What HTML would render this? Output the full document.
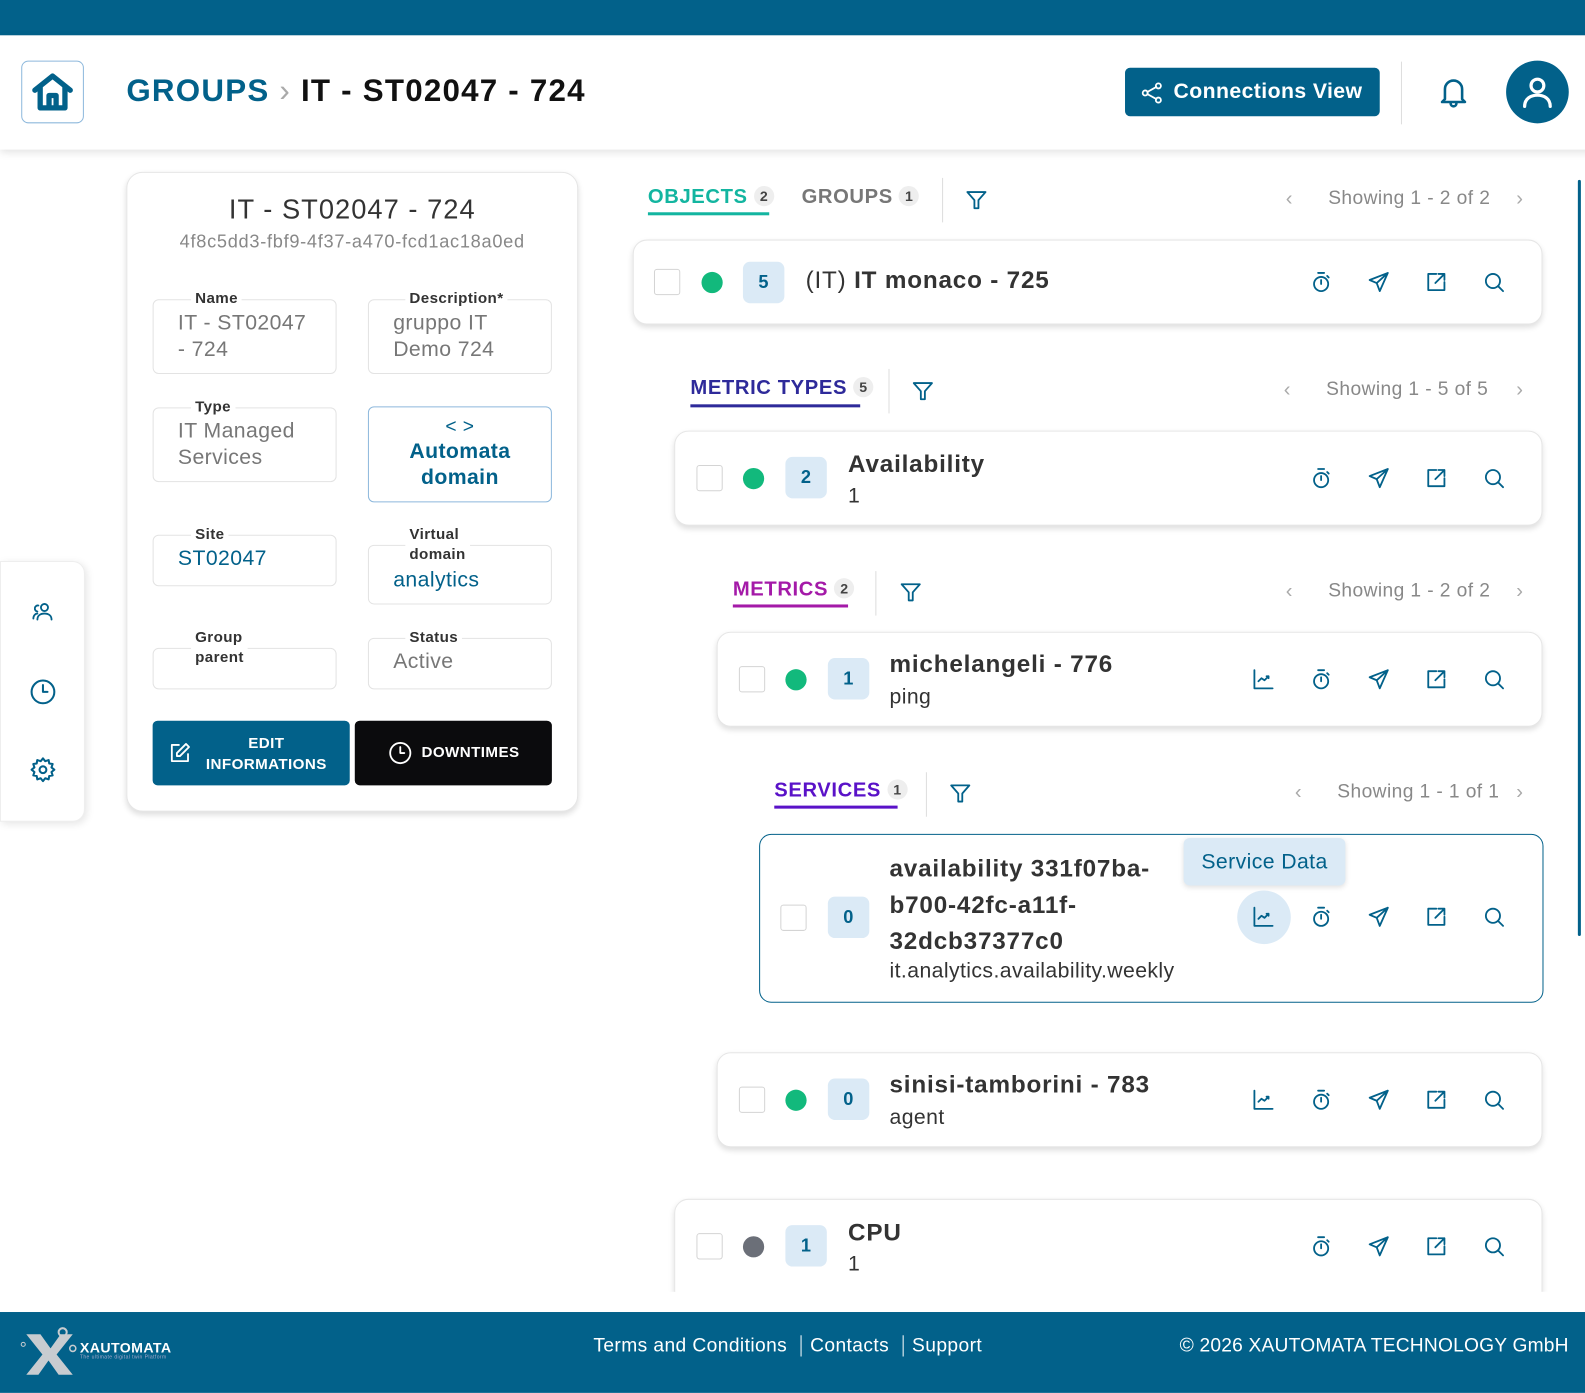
<!DOCTYPE html>
<html><head><meta charset="utf-8">
<style>
*{box-sizing:border-box;margin:0;padding:0}
body{width:1585px;height:1374px;position:relative;overflow:hidden;background:#fff;font-family:"Liberation Sans",sans-serif;color:#333;letter-spacing:0.4px}
#w{position:absolute;left:0;top:0;width:1568px;height:1360px;transform:scale(1.0108);transform-origin:0 0}
.a{position:absolute}
.c{color:#02618a}
svg.i{position:absolute;width:24px;height:24px;fill:none;stroke:#02618a;stroke-width:1.8;stroke-linecap:round;stroke-linejoin:round}
.card{position:absolute;background:#fff;border:1px solid #e6e6e6;border-radius:14px;box-shadow:0 3px 6px rgba(0,0,0,.13)}
.cb{position:absolute;width:26px;height:26px;border:1.5px solid #d4d4d4;border-radius:3px;background:#fff}
.dot{position:absolute;width:21px;height:21px;border-radius:50%;background:#12b97c}
.bd{position:absolute;width:41px;height:41px;border-radius:7px;background:#dbeaf6;color:#02618a;font-weight:bold;font-size:18px;text-align:center;line-height:41px}
.tab{position:absolute;font-weight:bold;font-size:20px;white-space:nowrap;letter-spacing:0.6px}
.cnt{display:inline-block;width:20px;height:20px;border-radius:50%;background:#eee;color:#444;font-size:14px;text-align:center;line-height:20px;margin-left:6px;vertical-align:2px;letter-spacing:0}
.ul{position:absolute;height:3px}
.vd{position:absolute;width:1px;background:#ddd}
.show{position:absolute;color:#888;font-size:19px;white-space:nowrap}
.chev{position:absolute;color:#aaa;font-size:20px}
.fld{position:absolute;border:1px solid #e3e3e3;border-radius:6px}
.lbl{position:absolute;background:#fff;font-weight:bold;font-size:15px;color:#333;padding:0 4px;line-height:20px}
.val{position:absolute;font-size:21px;color:#777;line-height:26px}
.val.c{color:#02618a}
.t1{position:absolute;font-size:24px;font-weight:bold;color:#333;white-space:nowrap;letter-spacing:0.8px}
.t2{position:absolute;font-size:21px;color:#333;white-space:nowrap}
</style></head><body>
<svg width="0" height="0" style="position:absolute">
<defs>
<symbol id="timer" viewBox="0 0 24 24"><circle cx="12" cy="14" r="7"/><path d="M9 3h6M12 10v4M18 6l1.5 1.5"/></symbol>
<symbol id="send" viewBox="0 0 24 24"><path d="M21 3L3 10l7 3 3 8z M10 13l11-10"/></symbol>
<symbol id="ext" viewBox="0 0 24 24"><path d="M12 4H4v16h16v-8M14 4h6v6M20 4l-9 9"/></symbol>
<symbol id="srch" viewBox="0 0 24 24"><circle cx="11" cy="11" r="7"/><path d="M16 16l5 5"/></symbol>
<symbol id="chart" viewBox="0 0 24 24"><path d="M3 3v18h18M7 14l3-3 3 2 4-4M15 9h2v2"/></symbol>
<symbol id="filt" viewBox="0 0 24 24"><path d="M3 4h18l-7 8v8h-4v-8z"/></symbol>
</defs></svg>
<div id="w">
<div class="a" style="left:0;top:0;width:1585px;height:35px;background:#02618a"></div>
<div class="a" style="left:0;top:35px;width:1585px;height:113px;background:#fff;box-shadow:0 3px 8px rgba(0,0,0,.12)"></div>
<div class="a" style="left:21px;top:60px;width:62px;height:62px;border:1px solid #8db8dc;border-radius:7px"></div>
<svg class="i" style="left:30px;top:70px;width:44px;height:42px;stroke-width:3" viewBox="0 0 24 24"><path d="M2 11L12 3l10 8M5 9v12h14V9M10 21v-7h4v7"/></svg>
<div class="a" style="left:125px;top:72px;font-size:31px;font-weight:bold;white-space:nowrap;letter-spacing:1.2px"><span class="c">GROUPS</span> <span style="color:#aaa;font-weight:normal">&#8250;</span> <span style="color:#111">IT - ST02047 - 724</span></div>
<div class="a" style="left:1113px;top:67px;width:252px;height:48px;background:#02618a;border-radius:5px;color:#fff;font-size:21px;line-height:48px;padding-left:48px;font-weight:bold">Connections View</div>
<svg class="i" style="left:1128px;top:80px;stroke:#fff" viewBox="0 0 24 24"><circle cx="5" cy="12" r="2.5"/><circle cx="18" cy="5" r="2.5"/><circle cx="18" cy="19" r="2.5"/><path d="M7 11l9-5M7 13l9 5"/></svg>
<div class="vd" style="left:1386px;top:61px;height:62px"></div>
<svg class="i" style="left:1421px;top:74px;width:34px;height:34px" viewBox="0 0 24 24"><path d="M6 17V10a6 6 0 0112 0v7l2 2H4z M10 20a2 2 0 004 0"/></svg>
<div class="a" style="left:1490px;top:60px;width:62px;height:62px;border-radius:50%;background:#02618a"></div>
<svg class="i" style="left:1502px;top:72px;width:38px;height:38px;stroke:#fff;stroke-width:2" viewBox="0 0 24 24"><circle cx="12" cy="8" r="4"/><path d="M4 21c0-5 4-7 8-7s8 2 8 7"/></svg>

<div class="a" style="left:0;top:555px;width:84px;height:258px;background:#fff;border:1px solid #eee;border-radius:0 12px 12px 0;box-shadow:2px 2px 8px rgba(0,0,0,.1)"></div>
<svg class="i" style="left:30px;top:593px" viewBox="0 0 24 24"><circle cx="14" cy="8" r="3.5"/><path d="M7 20c0-4 3-6 7-6s7 2 7 6M8 6a3 3 0 00-1 6M3 19c0-3 2-5 4-5"/></svg>
<svg class="i" style="left:29px;top:671px;width:27px;height:27px" viewBox="0 0 24 24"><circle cx="12" cy="12" r="10"/><path d="M12 6v6h4"/></svg>
<svg class="i" style="left:29px;top:748px;width:27px;height:27px" viewBox="0 0 24 24"><circle cx="12" cy="12" r="3"/><path d="M12 2l2 2.5 3-1 .5 3 3 .5-1 3L22 12l-2.5 2 1 3-3 .5-.5 3-3-1L12 22l-2-2.5-3 1-.5-3-3-.5 1-3L2 12l2.5-2-1-3 3-.5.5-3 3 1z"/></svg>

<div class="card" style="left:125px;top:170px;width:447px;height:633px;border-radius:16px"></div>
<div class="a" style="left:125px;top:192px;width:447px;text-align:center;font-size:27px;color:#333;letter-spacing:1px">IT - ST02047 - 724</div>
<div class="a" style="left:125px;top:229px;width:447px;text-align:center;font-size:18px;color:#888;letter-spacing:0.7px">4f8c5dd3-fbf9-4f37-a470-fcd1ac18a0ed</div>

<div class="fld" style="left:151px;top:296px;width:182px;height:74px"></div><div class="lbl" style="left:189px;top:286px">Name</div><div class="val" style="left:176px;top:307px">IT - ST02047<br>- 724</div>
<div class="fld" style="left:364px;top:296px;width:182px;height:74px"></div><div class="lbl" style="left:401px;top:286px">Description*</div><div class="val" style="left:389px;top:307px">gruppo IT<br>Demo 724</div>
<div class="fld" style="left:151px;top:403px;width:182px;height:74px"></div><div class="lbl" style="left:189px;top:393px">Type</div><div class="val" style="left:176px;top:414px">IT Managed<br>Services</div>
<div class="fld" style="left:364px;top:402px;width:182px;height:95px;border-color:#8db8dc"></div>
<div class="a c" style="left:364px;top:412px;width:182px;text-align:center;font-size:19px">&lt;&nbsp;&gt;</div>
<div class="a c" style="left:364px;top:434px;width:182px;text-align:center;font-size:21px;font-weight:bold;line-height:26px">Automata<br>domain</div>
<div class="fld" style="left:151px;top:529px;width:182px;height:51px"></div><div class="lbl" style="left:189px;top:519px">Site</div><div class="val c" style="left:176px;top:540px">ST02047</div>
<div class="fld" style="left:364px;top:539px;width:182px;height:59px"></div><div class="lbl" style="left:401px;top:519px">Virtual<br>domain</div><div class="val c" style="left:389px;top:561px">analytics</div>
<div class="fld" style="left:151px;top:641px;width:182px;height:41px"></div><div class="lbl" style="left:189px;top:621px">Group<br>parent</div>
<div class="fld" style="left:364px;top:631px;width:182px;height:51px"></div><div class="lbl" style="left:401px;top:621px">Status</div><div class="val" style="left:389px;top:642px">Active</div>

<div class="a" style="left:151px;top:713px;width:195px;height:64px;background:#02618a;border-radius:5px;color:#fff;font-weight:bold;font-size:15px;text-align:center;line-height:21px;padding:12px 0 0 30px">EDIT<br>INFORMATIONS</div>
<svg class="i" style="left:166px;top:733px;stroke:#fff" viewBox="0 0 24 24"><path d="M11 4H4v16h16v-7M18 3l3 3-9 9H9v-3z"/></svg>
<div class="a" style="left:351px;top:713px;width:195px;height:64px;background:#0b0b0d;border-radius:5px;color:#fff;font-weight:bold;font-size:15px;line-height:64px;padding-left:66px">DOWNTIMES</div>
<svg class="i" style="left:384px;top:733px;stroke:#fff" viewBox="0 0 24 24"><circle cx="12" cy="12" r="10"/><path d="M12 6v6h4"/></svg>

<div class="tab" style="left:641px;top:184px;color:#13b5a0">OBJECTS<span class="cnt">2</span></div>
<div class="ul" style="left:641px;top:210px;width:120px;background:#13b5a0"></div>
<div class="tab" style="left:793px;top:184px;color:#777">GROUPS<span class="cnt">1</span></div>
<div class="vd" style="left:932px;top:176px;height:44px"></div>
<svg class="i" style="left:954px;top:186px" viewBox="0 0 24 24"><use href="#filt"/></svg>
<div class="chev" style="left:1272px;top:186px">&#8249;</div><div class="show" style="left:1314px;top:186px">Showing 1 - 2 of 2</div><div class="chev" style="left:1500px;top:186px">&#8250;</div>

<div class="card" style="left:626px;top:237px;width:900px;height:84px"></div>
<div class="cb" style="left:647px;top:266px"></div><div class="dot" style="left:694px;top:269px"></div><div class="bd" style="left:735px;top:259px">5</div>
<div class="t1" style="left:797px;top:264px"><span style="font-weight:normal">(IT)</span> IT monaco - 725</div>

<div class="tab" style="left:683px;top:373px;color:#2e2a9a">METRIC TYPES<span class="cnt">5</span></div>
<div class="ul" style="left:683px;top:400px;width:168px;background:#2e2a9a"></div>
<div class="vd" style="left:879px;top:365px;height:44px"></div>
<svg class="i" style="left:901px;top:375px" viewBox="0 0 24 24"><use href="#filt"/></svg>
<div class="chev" style="left:1270px;top:375px">&#8249;</div><div class="show" style="left:1312px;top:375px">Showing 1 - 5 of 5</div><div class="chev" style="left:1500px;top:375px">&#8250;</div>

<div class="card" style="left:667px;top:426px;width:859px;height:94px"></div>
<div class="cb" style="left:689px;top:460px"></div><div class="dot" style="left:735px;top:463px"></div><div class="bd" style="left:777px;top:452px">2</div>
<div class="t1" style="left:839px;top:446px">Availability</div><div class="t2" style="left:839px;top:479px">1</div>

<div class="tab" style="left:725px;top:572px;color:#a41aa8">METRICS<span class="cnt">2</span></div>
<div class="ul" style="left:725px;top:598px;width:114px;background:#a41aa8"></div>
<div class="vd" style="left:866px;top:565px;height:44px"></div>
<svg class="i" style="left:889px;top:574px" viewBox="0 0 24 24"><use href="#filt"/></svg>
<div class="chev" style="left:1272px;top:574px">&#8249;</div><div class="show" style="left:1314px;top:574px">Showing 1 - 2 of 2</div><div class="chev" style="left:1500px;top:574px">&#8250;</div>

<div class="card" style="left:709px;top:625px;width:817px;height:94px"></div>
<div class="cb" style="left:731px;top:659px"></div><div class="dot" style="left:777px;top:662px"></div><div class="bd" style="left:819px;top:651px">1</div>
<div class="t1" style="left:880px;top:644px">michelangeli - 776</div><div class="t2" style="left:880px;top:678px">ping</div>

<div class="tab" style="left:766px;top:771px;color:#5a12c8">SERVICES<span class="cnt">1</span></div>
<div class="ul" style="left:766px;top:797px;width:122px;background:#5a12c8"></div>
<div class="vd" style="left:916px;top:764px;height:44px"></div>
<svg class="i" style="left:938px;top:773px" viewBox="0 0 24 24"><use href="#filt"/></svg>
<div class="chev" style="left:1281px;top:773px">&#8249;</div><div class="show" style="left:1323px;top:773px">Showing 1 - 1 of 1</div><div class="chev" style="left:1500px;top:773px">&#8250;</div>

<div class="a" style="left:751px;top:825px;width:776px;height:167px;border:1.5px solid #02618a;border-radius:12px;background:#fff"></div>
<div class="cb" style="left:772px;top:895px"></div><div class="bd" style="left:819px;top:887px">0</div>
<div class="t1" style="left:880px;top:842px;line-height:36px">availability 331f07ba-<br>b700-42fc-a11f-<br>32dcb37377c0</div>
<div class="t2" style="left:880px;top:949px">it.analytics.availability.weekly</div>
<div class="a" style="left:1171px;top:829px;width:160px;height:47px;background:#dbeaf6;border-radius:6px;box-shadow:0 2px 5px rgba(0,0,0,.12);color:#02618a;font-size:21px;text-align:center;line-height:47px">Service Data</div>
<div class="a" style="left:1224px;top:881px;width:53px;height:53px;border-radius:50%;background:#dbeaf6"></div>

<div class="card" style="left:709px;top:1041px;width:817px;height:94px"></div>
<div class="cb" style="left:731px;top:1075px"></div><div class="dot" style="left:777px;top:1078px"></div><div class="bd" style="left:819px;top:1067px">0</div>
<div class="t1" style="left:880px;top:1060px">sinisi-tamborini - 783</div><div class="t2" style="left:880px;top:1094px">agent</div>

<div class="card" style="left:667px;top:1186px;width:859px;height:120px"></div>
<div class="cb" style="left:689px;top:1220px"></div><div class="dot" style="left:735px;top:1223px;background:#6b6f78"></div><div class="bd" style="left:777px;top:1212px">1</div>
<div class="t1" style="left:839px;top:1206px">CPU</div><div class="t2" style="left:839px;top:1239px">1</div>
<div class="a" style="left:600px;top:1278px;width:985px;height:20px;background:#fff"></div>

<svg class="i" style="left:1295px;top:267px"><use href="#timer"/></svg><svg class="i" style="left:1352px;top:267px"><use href="#send"/></svg><svg class="i" style="left:1409px;top:267px"><use href="#ext"/></svg><svg class="i" style="left:1466px;top:267px"><use href="#srch"/></svg>
<svg class="i" style="left:1295px;top:461px"><use href="#timer"/></svg><svg class="i" style="left:1352px;top:461px"><use href="#send"/></svg><svg class="i" style="left:1409px;top:461px"><use href="#ext"/></svg><svg class="i" style="left:1466px;top:461px"><use href="#srch"/></svg>
<svg class="i" style="left:1238px;top:660px"><use href="#chart"/></svg><svg class="i" style="left:1295px;top:660px"><use href="#timer"/></svg><svg class="i" style="left:1352px;top:660px"><use href="#send"/></svg><svg class="i" style="left:1409px;top:660px"><use href="#ext"/></svg><svg class="i" style="left:1466px;top:660px"><use href="#srch"/></svg>
<svg class="i" style="left:1238px;top:895px"><use href="#chart"/></svg><svg class="i" style="left:1295px;top:895px"><use href="#timer"/></svg><svg class="i" style="left:1352px;top:895px"><use href="#send"/></svg><svg class="i" style="left:1409px;top:895px"><use href="#ext"/></svg><svg class="i" style="left:1466px;top:895px"><use href="#srch"/></svg>
<svg class="i" style="left:1238px;top:1076px"><use href="#chart"/></svg><svg class="i" style="left:1295px;top:1076px"><use href="#timer"/></svg><svg class="i" style="left:1352px;top:1076px"><use href="#send"/></svg><svg class="i" style="left:1409px;top:1076px"><use href="#ext"/></svg><svg class="i" style="left:1466px;top:1076px"><use href="#srch"/></svg>
<svg class="i" style="left:1295px;top:1221px"><use href="#timer"/></svg><svg class="i" style="left:1352px;top:1221px"><use href="#send"/></svg><svg class="i" style="left:1409px;top:1221px"><use href="#ext"/></svg><svg class="i" style="left:1466px;top:1221px"><use href="#srch"/></svg>

<div class="a" style="left:1561px;top:178px;width:3px;height:748px;background:#02618a;border-radius:2px"></div>

<div class="a" style="left:0;top:1298px;width:1585px;height:80px;background:#02618a"></div>
<svg class="a" style="left:20px;top:1312px" width="60" height="50" viewBox="0 0 60 50"><path d="M6 8h14l10 14 10-14h12L36 28l16 20H38L28 34 18 48H6l16-20z" fill="#c8ccd0"/><circle cx="42" cy="6" r="4" fill="none" stroke="#c8ccd0" stroke-width="2"/><circle cx="52" cy="22" r="3" fill="none" stroke="#c8ccd0" stroke-width="1.5"/><circle cx="3" cy="18" r="2" fill="none" stroke="#c8ccd0"/></svg>
<div class="a" style="left:79px;top:1325px;color:#fff;font-weight:bold;font-size:14px">XAUTOMATA</div>
<div class="a" style="left:79px;top:1340px;color:#aac;font-size:5px">The ultimate digital twin Platform</div>
<div class="a" style="left:587px;top:1321px;color:#fff;font-size:19px;white-space:nowrap">Terms and Conditions <span style="border-left:1px solid #fff;margin:0 8px"></span> Contacts <span style="border-left:1px solid #fff;margin:0 8px"></span> Support</div>
<div class="a" style="right:16px;top:1321px;color:#fff;font-size:19px;white-space:nowrap;letter-spacing:0.2px">© 2026 XAUTOMATA TECHNOLOGY GmbH</div>
</div>
</body></html>
